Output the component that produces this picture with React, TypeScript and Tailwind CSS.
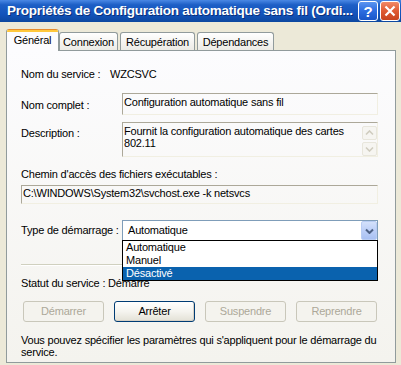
import React from "react";

function Tab({ label, w, selected, ml }: { label: string; w: string; selected?: boolean; ml?: string }) {
  if (selected) {
    return (
      <div className={`relative z-10 ${w} h-[22px] -mb-px flex flex-col bg-[#fcfcfe] border-l border-r border-[#919b9c] rounded-t-[3px] overflow-hidden`}>
        <div className="h-[1px] bg-[#e68b2c]" />
        <div className="h-[2px] bg-[#ffc83c]" />
        <div className="flex-1 flex items-start justify-center pt-[2px] leading-[13px] whitespace-nowrap">{label}</div>
      </div>
    );
  }
  return (
    <div className={`${w} ${ml ?? ""} h-[18px] flex items-center justify-center border-t border-l border-r border-[#919b9c] rounded-t-[3px] bg-gradient-to-b from-[#ffffff] to-[#ecebe5] leading-[13px] pt-[1px] whitespace-nowrap`}>
      {label}
    </div>
  );
}

function Btn({ label, disabled }: { label: string; disabled?: boolean }) {
  return disabled ? (
    <div className="w-[81px] h-[21px] flex items-center justify-center rounded-[3px] border border-[#c9c7ba] bg-[#f4f3ee] text-[#aca899] leading-[13px]">
      {label}
    </div>
  ) : (
    <div className="w-[81px] h-[21px] flex items-center justify-center rounded-[3px] border border-[#003c74] bg-gradient-to-b from-[#ffffff] via-[#f5f4ef] to-[#e3e1d6] text-black leading-[13px] shadow-[inset_-1px_-1px_0_#d6d0c5]">
      {label}
    </div>
  );
}

function Chevron({ dir, color, w = 2 }: { dir: "up" | "down"; color: string; w?: number }) {
  return (
    <svg width="9" height="6" viewBox="0 0 9 6">
      {dir === "down" ? (
        <path d="M1 1.5 L4.5 5 L8 1.5" fill="none" stroke={color} strokeWidth={w} />
      ) : (
        <path d="M1 4.5 L4.5 1 L8 4.5" fill="none" stroke={color} strokeWidth={w} />
      )}
    </svg>
  );
}

const sunken =
  "border-t border-l border-t-[#aca899] border-l-[#aca899] border-b border-r border-b-[#f1efe2] border-r-[#f1efe2]";

export default function App() {
  return (
    <div className="w-[401px] h-[365px] bg-[#ece9d8] overflow-hidden font-['Liberation_Sans',Arial,sans-serif] text-[11px] tracking-[-0.2px] text-black whitespace-nowrap">
      {/* Title bar */}
      <div className="h-[22px] flex items-center bg-[linear-gradient(180deg,#4a88e4_0%,#1d5fc6_22%,#1353ba_65%,#0c479f_100%)]">
        <div className="flex-1 pl-[7px] text-white font-bold text-[13.5px] leading-[16px] whitespace-nowrap overflow-hidden tracking-[-0.25px] [text-shadow:1px_1px_0_#0a2f7a]">
          Propriétés de Configuration automatique sans fil (Ordi...
        </div>
        <div className="w-[20px] h-[20px] mr-[2px] rounded-[3px] border border-white bg-[linear-gradient(180deg,#5b95f0_0%,#2c6ce0_50%,#1a56c8_100%)] flex items-center justify-center text-white font-bold text-[15px] leading-none">
          ?
        </div>
        <div className="w-[20px] h-[20px] mr-[1px] rounded-[3px] border border-white bg-[linear-gradient(180deg,#f08a68_0%,#df5a32_50%,#c8441e_100%)] flex items-center justify-center">
          <svg width="12" height="12" viewBox="0 0 12 12">
            <path d="M1.5 1.5 L10.5 10.5 M10.5 1.5 L1.5 10.5" stroke="white" strokeWidth="2.2" />
          </svg>
        </div>
      </div>

      {/* Tabs */}
      <div className="mt-[7px] pl-[6px] h-[21px] flex items-end">
        <Tab label="Général" w="w-[53px]" selected />
        <Tab label="Connexion" w="w-[59px]" />
        <Tab label="Récupération" w="w-[75px]" ml="ml-[2px]" />
        <Tab label="Dépendances" w="w-[77px]" ml="ml-[2px]" />
      </div>

      {/* Panel */}
      <div className="ml-[6px] w-[390px] h-[313px] border border-[#919b9c] bg-gradient-to-b from-[#fcfcfe] to-[#f4f3ee] pl-[14px] flex flex-col">
        {/* Nom du service */}
        <div className="mt-[17px] h-[13px] leading-[13px] flex">
          <div className="w-[89px]">Nom du service :</div>
          <div>WZCSVC</div>
        </div>

        {/* Nom complet */}
        <div className="mt-[12px] flex">
          <div className="w-[101px] pt-[6px] leading-[13px]">Nom complet :</div>
          <div className={`w-[256px] h-[22px] ${sunken} pl-[1px] pt-[2px] leading-[13px]`}>
            Configuration automatique sans fil
          </div>
        </div>

        {/* Description */}
        <div className="mt-[7px] flex">
          <div className="w-[101px] pt-[5px] leading-[13px]">Description :</div>
          <div className={`w-[256px] h-[35px] flex ${sunken}`}>
            <div className="flex-1 pl-[1px] pt-[2px] leading-[12px]">
              Fournit la configuration automatique des cartes
              <br />
              802.11
            </div>
            <div className="w-[15px] flex flex-col pt-[3px] gap-[2px]">
              <div className="h-[14px] rounded-[2px] border border-[#e8e6dc] bg-[#f6f5f1] flex items-center justify-center">
                <Chevron dir="up" color="#cfccbf" w={1.6} />
              </div>
              <div className="h-[14px] rounded-[2px] border border-[#e8e6dc] bg-[#f6f5f1] flex items-center justify-center">
                <Chevron dir="down" color="#cfccbf" w={1.6} />
              </div>
            </div>
          </div>
        </div>

        {/* Chemin */}
        <div className="mt-[11px] h-[13px] leading-[13px]">Chemin d'accès des fichiers exécutables :</div>
        <div className={`mt-[4px] w-[357px] h-[19px] ${sunken} pl-[1px] pt-[1px] leading-[13px]`}>
          C:\WINDOWS\System32\svchost.exe -k netsvcs
        </div>

        {/* Type de démarrage */}
        <div className="mt-[16px] flex items-center">
          <div className="w-[101px] leading-[13px]">Type de démarrage :</div>
          <div className="relative w-[256px] h-[21px] border border-[#7f9db9] bg-white flex">
            <div className="flex-1 pl-[5px] flex items-center leading-[13px]">Automatique</div>
            <div className="w-[16px] h-[19px] rounded-[2px] border border-[#b9cdf4] bg-[linear-gradient(180deg,#d4e1fb_0%,#bccff8_50%,#a9c1f3_100%)] flex items-center justify-center">
              <Chevron dir="down" color="#4d6185" w={2} />
            </div>
            {/* Dropdown list */}
            <div className="absolute left-[-1px] top-[19px] w-[256px] h-[41px] border border-black bg-white z-20 flex flex-col">
              <div className="h-[13px] leading-[13px] pl-[3px]">Automatique</div>
              <div className="h-[13px] leading-[13px] pl-[3px]">Manuel</div>
              <div className="h-[13px] leading-[13px] pl-[3px] bg-[#0a62ae] text-white">Désactivé</div>
            </div>
          </div>
        </div>

        {/* Separator */}
        <div className="mt-[23px] w-[357px] h-[2px] flex flex-col">
          <div className="h-[1px] bg-[#d0d0bf]" />
          <div className="h-[1px] bg-white" />
        </div>

        {/* Statut */}
        <div className="mt-[11px] h-[13px] leading-[13px]">Statut du service : Démarré</div>

        {/* Buttons */}
        <div className="mt-[11px] ml-[2px] w-[354px] flex justify-between">
          <Btn label="Démarrer" disabled />
          <Btn label="Arrêter" />
          <Btn label="Suspendre" disabled />
          <Btn label="Reprendre" disabled />
        </div>

        {/* Help text */}
        <div className="mt-[12px] leading-[12px] w-[362px]">
          Vous pouvez spécifier les paramètres qui s'appliquent pour le démarrage du
          <br />
          service.
        </div>
      </div>
    </div>
  );
}
